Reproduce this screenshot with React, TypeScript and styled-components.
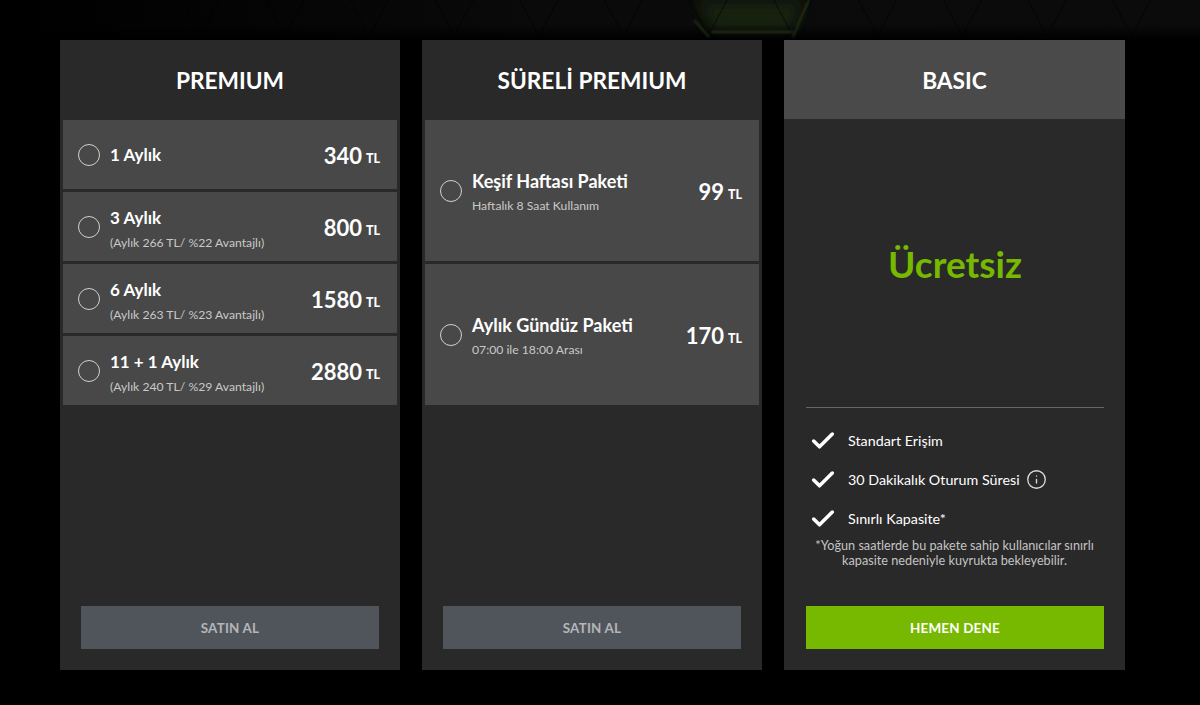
import { Check, Info } from "lucide-react";
import styled, { createGlobalStyle } from "styled-components";

const GlobalStyle = createGlobalStyle`
  html, body {
    margin: 0;
    background: #000;
    font-family: "Lato", "Liberation Sans", sans-serif;
    color: #fff;
  }
`;

const Page = styled.div`
  position: relative;
  width: 1200px;
  height: 705px;
  box-sizing: border-box;
  padding: 40px 75px 35px 60px;
  overflow: hidden;
  background: #000;
`;

const Pattern = styled.svg`
  position: absolute;
  top: 0;
  left: 0;
  width: 1200px;
  height: 40px;
`;

const Columns = styled.div`
  position: relative;
  display: grid;
  grid-template-columns: 340px 340px 341px;
  column-gap: 22px;
  height: 630px;
`;

const Card = styled.section`
  display: flex;
  flex-direction: column;
  background: #292929;
`;

const CardHeader = styled.h2<{ $filled?: boolean }>`
  display: flex;
  align-items: center;
  justify-content: center;
  height: ${(p) => (p.$filled ? "79px" : "80px")};
  flex: none;
  margin: 0;
  padding-top: ${(p) => (p.$filled ? "2px" : "1px")};
  box-sizing: border-box;
  font-size: 22.7px;
  font-weight: 700;
  background: ${(p) => (p.$filled ? "#4a4a4a" : "transparent")};
`;

const OptionList = styled.div`
  display: flex;
  flex-direction: column;
  gap: 3px;
  padding: 0 3px;
  flex: 1;
`;

const Option = styled.div<{ $tall?: boolean }>`
  display: flex;
  align-items: center;
  height: ${(p) => (p.$tall ? "141px" : "69px")};
  box-sizing: border-box;
  padding: 0 17px 0 15px;
  background: #484848;
`;

const Radio = styled.span`
  flex: none;
  width: 20px;
  height: 20px;
  border: 1px solid #d0d0d0;
  border-radius: 50%;
  margin-right: 10px;
`;

const OptionText = styled.div`
  flex: 1;
  display: flex;
  flex-direction: column;
  gap: 8px;
`;

const OptionName = styled.div<{ $tall?: boolean }>`
  font-size: ${(p) => (p.$tall ? "18px" : "17px")};
  font-weight: 700;
  line-height: 20px;
  margin-top: ${(p) => (p.$tall ? "-1px" : "0")};
`;

const OptionNote = styled.div`
  margin-bottom: -4px;
  font-size: 12.2px;
  line-height: 14px;
  color: #c8c8c8;
`;

const Price = styled.div`
  display: flex;
  align-items: baseline;
  gap: 4px;
  margin-top: 1px;
  font-size: 22px;
  font-weight: 700;
`;

const Currency = styled.span`
  position: relative;
  top: -1px;
  font-size: 12.5px;
  font-weight: 900;
`;

const Footer = styled.div<{ $wide?: boolean }>`
  flex: none;
  padding: 0 21px 21px ${(p) => (p.$wide ? "22px" : "21px")};
`;

const BuyButton = styled.button<{ $primary?: boolean }>`
  display: block;
  width: 100%;
  height: 43px;
  border: 0;
  font-family: inherit;
  font-size: 13.4px;
  font-weight: 700;
  letter-spacing: 0.2px;
  color: ${(p) => (p.$primary ? "#fff" : "#b4b6b8")};
  background: ${(p) => (p.$primary ? "#76b900" : "#50555c")};
`;

const FreeBox = styled.div`
  display: flex;
  align-items: center;
  justify-content: center;
  flex: none;
  height: 288px;
  margin: 0 21px 0 22px;
  border-bottom: 1px solid #666;
  font-size: 37px;
  font-weight: 700;
  color: #76b900;
`;

const Features = styled.ul`
  flex: 1;
  list-style: none;
  margin: 0;
  padding: 20px 21px 0 25px;
  display: flex;
  flex-direction: column;
  gap: 14px;
`;

const Feature = styled.li`
  display: flex;
  align-items: center;
  height: 25px;
  font-size: 14.3px;
`;

const FeatureCheck = styled(Check)`
  flex: none;
  margin-right: 11px;
`;

const InfoIcon = styled(Info)`
  margin-left: 6px;
  color: #ddd;
`;

const FinePrint = styled.p`
  margin: -7px 0 0 -4px;
  font-size: 12.7px;
  line-height: 15px;
  text-align: center;
  color: #c4c4c4;
`;

const premium = [
  { name: "1 Aylık", price: "340" },
  { name: "3 Aylık", note: "(Aylık 266 TL/ %22 Avantajlı)", price: "800" },
  { name: "6 Aylık", note: "(Aylık 263 TL/ %23 Avantajlı)", price: "1580" },
  { name: "11 + 1 Aylık", note: "(Aylık 240 TL/ %29 Avantajlı)", price: "2880" },
];

const timed = [
  { name: "Keşif Haftası Paketi", note: "Haftalık 8 Saat Kullanım", price: "99" },
  { name: "Aylık Gündüz Paketi", note: "07:00 ile 18:00 Arası", price: "170" },
];

// bottoms of the V shapes in the backdrop, 85px apart
const vees = Array.from({ length: 12 }, (_, i) => 200 + i * 84.7);

function OptionRow({ name, note, price, tall }: { name: string; note?: string; price: string; tall?: boolean }) {
  return (
    <Option $tall={tall}>
      <Radio />
      <OptionText>
        <OptionName $tall={tall}>{name}</OptionName>
        {note && <OptionNote>{note}</OptionNote>}
      </OptionText>
      <Price>
        {price}
        <Currency>TL</Currency>
      </Price>
    </Option>
  );
}

function App() {
  return (
    <Page>
      <GlobalStyle />
      <Pattern viewBox="0 0 1200 40" fill="none">
        <defs>
          <linearGradient id="sideFade" x1="0" y1="0" x2="1" y2="0">
            <stop offset="0" stopColor="#000" />
            <stop offset="0.2" stopColor="#040404" />
            <stop offset="0.45" stopColor="#0a0a0a" />
            <stop offset="1" stopColor="#0b0b0b" />
          </linearGradient>
          <linearGradient id="bottomFade" x1="0" y1="0" x2="0" y2="1">
            <stop offset="0.6" stopColor="#000" stopOpacity="0" />
            <stop offset="1" stopColor="#000" />
          </linearGradient>
          <filter id="soft" x="-30%" y="-30%" width="160%" height="160%">
            <feGaussianBlur stdDeviation="8" />
          </filter>
          <filter id="softLine">
            <feGaussianBlur stdDeviation="1" />
          </filter>
        </defs>
        <rect width="1200" height="40" fill="url(#sideFade)" />
        <polygon points="695,0 805,0 790,34 715,34" fill="#16200f" filter="url(#soft)" />
        {vees.map((x) => (
          <path key={x} d={`M${x - 19} 0L${x} 36L${x + 19} 0`} stroke="#000" strokeOpacity="0.6" strokeWidth="1" />
        ))}
        <rect width="1200" height="40" fill="url(#bottomFade)" />
        <path
          d="M694 20L709 37M711 32H793M809 0L793 37"
          stroke="#46602f"
          strokeWidth="1.4"
          strokeOpacity="0.6"
          filter="url(#softLine)"
        />
      </Pattern>
      <Columns>
        <Card>
          <CardHeader>PREMIUM</CardHeader>
          <OptionList>
            {premium.map((o) => (
              <OptionRow key={o.name} {...o} />
            ))}
          </OptionList>
          <Footer>
            <BuyButton>SATIN AL</BuyButton>
          </Footer>
        </Card>
        <Card>
          <CardHeader>SÜRELİ PREMIUM</CardHeader>
          <OptionList>
            {timed.map((o) => (
              <OptionRow key={o.name} {...o} tall />
            ))}
          </OptionList>
          <Footer>
            <BuyButton>SATIN AL</BuyButton>
          </Footer>
        </Card>
        <Card>
          <CardHeader $filled>BASIC</CardHeader>
          <FreeBox>Ücretsiz</FreeBox>
          <Features>
            <Feature>
              <FeatureCheck size={28} strokeWidth={3} />
              Standart Erişim
            </Feature>
            <Feature>
              <FeatureCheck size={28} strokeWidth={3} />
              30 Dakikalık Oturum Süresi
              <InfoIcon size={21} strokeWidth={1.5} />
            </Feature>
            <Feature>
              <FeatureCheck size={28} strokeWidth={3} />
              Sınırlı Kapasite*
            </Feature>
            <FinePrint>
              *Yoğun saatlerde bu pakete sahip kullanıcılar sınırlı
              <br />
              kapasite nedeniyle kuyrukta bekleyebilir.
            </FinePrint>
          </Features>
          <Footer $wide>
            <BuyButton $primary>HEMEN DENE</BuyButton>
          </Footer>
        </Card>
      </Columns>
    </Page>
  );
}

export default App;
